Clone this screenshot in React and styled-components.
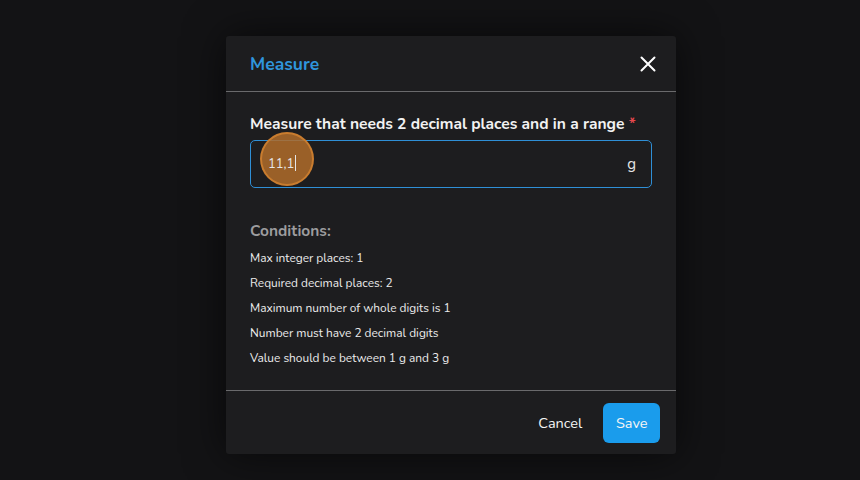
import React from 'react'
import styled, { createGlobalStyle } from 'styled-components'

const Global = createGlobalStyle`
  html, body { margin: 0; padding: 0; background: #131315; }
  body { font-family: "Nunito", Lato, "Open Sans", sans-serif; }
`

const Page = styled.div`
  width: 860px;
  height: 480px;
  display: flex;
  padding: 36px 0 0 226px;
  box-sizing: border-box;
  background: #131315;
`

const Modal = styled.div`
  width: 450px;
  height: 418px;
  background: #1d1d1f;
  border-radius: 3px;
  display: flex;
  flex-direction: column;
  box-shadow: 0 0 40px rgba(0, 0, 0, 0.6);
`

const Header = styled.div`
  height: 55px;
  padding: 0 18px 0 24px;
  display: flex;
  align-items: center;
  justify-content: space-between;
  border-bottom: 1px solid #6a6a6c;
`

const Title = styled.h2`
  margin: 0;
  font-size: 17.5px;
  font-weight: 700;
  color: #2f95dc;
`

const Close = styled.button`
  background: none;
  border: 0;
  padding: 0;
  width: 20px;
  height: 20px;
  display: flex;
  align-items: center;
  justify-content: center;
  cursor: pointer;
`

const Body = styled.div`
  flex: 1;
  padding: 22px 24px 0 24px;
  display: flex;
  flex-direction: column;
`

const Label = styled.label`
  font-size: 15.6px;
  font-weight: 700;
  color: #f2f2f2;
  line-height: 20px;
  span { color: #e5484d; }
`

const Field = styled.div`
  margin-top: 6px;
  width: 402px;
  height: 48px;
  box-sizing: border-box;
  border: 1px solid #2f8fd6;
  border-radius: 5px;
  display: flex;
  align-items: center;
  justify-content: space-between;
  padding: 0 15px 0 17px;
  position: relative;
`

const Value = styled.span`
  font-size: 13px;
  color: #e6e6e6;
  position: relative;
  z-index: 1;
  &::after {
    content: "";
    display: inline-block;
    width: 1px;
    height: 16px;
    background: #e6e6e6;
    vertical-align: -3px;
    margin-left: 1px;
  }
`

const Unit = styled.span`
  font-size: 15px;
  color: #e6e6e6;
`

const Touch = styled.div`
  position: absolute;
  left: 9px;
  top: -9px;
  width: 54px;
  height: 54px;
  border-radius: 50%;
  background: rgba(176, 108, 42, 0.85);
  border: 2px solid rgba(206, 128, 48, 0.9);
  box-sizing: border-box;
`

const Heading = styled.div`
  margin-top: 33px;
  font-size: 15.5px;
  font-weight: 700;
  color: #9c9c9e;
  line-height: 20px;
`

const List = styled.ul`
  list-style: none;
  margin: 5px 0 0;
  padding: 0;
`

const Item = styled.li`
  font-size: 11.9px;
  color: #ececec;
  line-height: 25px;
`

const Footer = styled.div`
  height: 63px;
  border-top: 1px solid #6a6a6c;
  display: flex;
  align-items: center;
  justify-content: flex-end;
  gap: 21px;
  padding: 0 16px;
`

const Button = styled.button`
  font-family: inherit;
  font-size: 14.5px;
  border: 0;
  border-radius: 6px;
  height: 40px;
  padding: 0 ${p => (p.$primary ? '12.5px' : '0')};
  background: ${p => (p.$primary ? '#1a9cec' : 'transparent')};
  color: #f5f5f5;
  cursor: pointer;
`

const conditions = [
  'Max integer places: 1',
  'Required decimal places: 2',
  'Maximum number of whole digits is 1',
  'Number must have 2 decimal digits',
  'Value should be between 1 g and 3 g',
]

export default function App() {
  return (
    <>
      <Global />
      <Page>
        <Modal>
          <Header>
            <Title>Measure</Title>
            <Close aria-label="close">
              <svg width="16" height="16" viewBox="0 0 16 16">
                <path d="M1.5 1.5 L14.5 14.5 M14.5 1.5 L1.5 14.5" stroke="#fff" strokeWidth="2" strokeLinecap="round" />
              </svg>
            </Close>
          </Header>
          <Body>
            <Label>Measure that needs 2 decimal places and in a range <span>*</span></Label>
            <Field>
              <Touch />
              <Value>11,1</Value>
              <Unit>g</Unit>
            </Field>
            <Heading>Conditions:</Heading>
            <List>
              {conditions.map(c => <Item key={c}>{c}</Item>)}
            </List>
          </Body>
          <Footer>
            <Button>Cancel</Button>
            <Button $primary>Save</Button>
          </Footer>
        </Modal>
      </Page>
    </>
  )
}
